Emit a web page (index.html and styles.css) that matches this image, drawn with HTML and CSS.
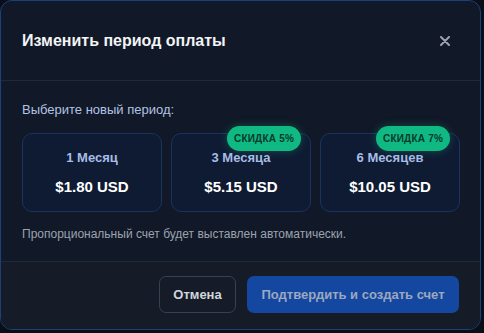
FILE: index.html
```html
<!DOCTYPE html>
<html lang="ru">
<head>
<meta charset="utf-8">
<link rel="stylesheet" href="styles.css">
</head>
<body>
<div class="modal">
  <div class="modal-header">
    <h2 class="title">Изменить период оплаты</h2>
    <button class="close" aria-label="Закрыть">
      <svg width="10" height="10" viewBox="0 0 10 10"><path d="M1 1L9 9M9 1L1 9" stroke="#9ca3af" stroke-width="2" stroke-linecap="round"/></svg>
    </button>
  </div>
  <div class="modal-body">
    <p class="label">Выберите новый период:</p>
    <div class="plans">
      <div class="plan">
        <div class="plan-name">1 Месяц</div>
        <div class="plan-price">$1.80 USD</div>
      </div>
      <div class="plan">
        <span class="badge">СКИДКА 5%</span>
        <div class="plan-name">3 Месяца</div>
        <div class="plan-price">$5.15 USD</div>
      </div>
      <div class="plan">
        <span class="badge">СКИДКА 7%</span>
        <div class="plan-name">6 Месяцев</div>
        <div class="plan-price">$10.05 USD</div>
      </div>
    </div>
    <p class="note">Пропорциональный счет будет выставлен автоматически.</p>
  </div>
  <div class="modal-footer">
    <button class="btn btn-cancel">Отмена</button>
    <button class="btn btn-primary">Подтвердить и создать счет</button>
  </div>
</div>
</body>
</html>
```
FILE: styles.css
```css
* { box-sizing: border-box; }
html, body { margin: 0; padding: 0; }
body {
  width: 484px;
  height: 333px;
  background: #0a0e16;
  font-family: "Liberation Sans", Arial, sans-serif;
  overflow: hidden;
}
.modal {
  width: 481px;
  height: 330px;
  background: #111827;
  border: 1px solid #1d3f7a;
  border-radius: 12px;
  overflow: hidden;
  display: flex;
  flex-direction: column;
}
.modal-header {
  height: 80px;
  display: flex;
  align-items: center;
  justify-content: space-between;
  padding: 0 30px 0 21px;
  border-bottom: 1px solid #1f2937;
}
.title {
  margin: 0;
  font-size: 16px;
  font-weight: 700;
  color: #f3f4f6;
}
.close {
  background: none;
  border: 0;
  padding: 0;
  width: 10px;
  height: 10px;
  display: flex;
}
.modal-body {
  padding: 21px 21px 19px 21px;
  flex: 1;
}
.label {
  margin: 0;
  font-size: 13px;
  line-height: 16px;
  color: #b3c3e3;
}
.plans {
  margin-top: 15px;
  display: grid;
  grid-template-columns: repeat(3, 140px);
  gap: 9px;
}
.plan {
  position: relative;
  height: 79px;
  background: #0f1b33;
  border: 1px solid #1b3261;
  border-radius: 10px;
  display: flex;
  flex-direction: column;
  align-items: center;
  padding-top: 15px;
}
.plan-name {
  font-size: 13px;
  line-height: 17px;
  font-weight: 700;
  color: #a8bde6;
}
.plan-price {
  margin-top: 11px;
  font-size: 15px;
  line-height: 19px;
  font-weight: 700;
  color: #ffffff;
}
.badge {
  position: absolute;
  top: -8px;
  right: 9px;
  height: 25px;
  padding: 0 7px;
  border-radius: 13px;
  background: #10b981;
  color: #063a2c;
  font-size: 10px;
  font-weight: 700;
  letter-spacing: 0.2px;
  display: flex;
  align-items: center;
  box-shadow: 0 0 8px rgba(16, 185, 129, 0.35);
}
.note {
  margin: 14px 0 0 0;
  font-size: 12px;
  line-height: 16px;
  color: #9ca3af;
}
.modal-footer {
  height: 68px;
  background: #151c28;
  border-top: 1px solid #1f2937;
  display: flex;
  justify-content: flex-end;
  align-items: flex-start;
  gap: 11px;
  padding: 14px 21px 0 0;
}
.btn {
  height: 37px;
  border-radius: 7px;
  font-family: "Liberation Sans", Arial, sans-serif;
  font-size: 13px;
  font-weight: 700;
}
.btn-cancel {
  width: 77px;
  background: transparent;
  border: 1px solid #374151;
  color: #d1d5db;
}
.btn-primary {
  width: 212px;
  background: #1447a0;
  border: 0;
  color: #9ca8be;
}
```
